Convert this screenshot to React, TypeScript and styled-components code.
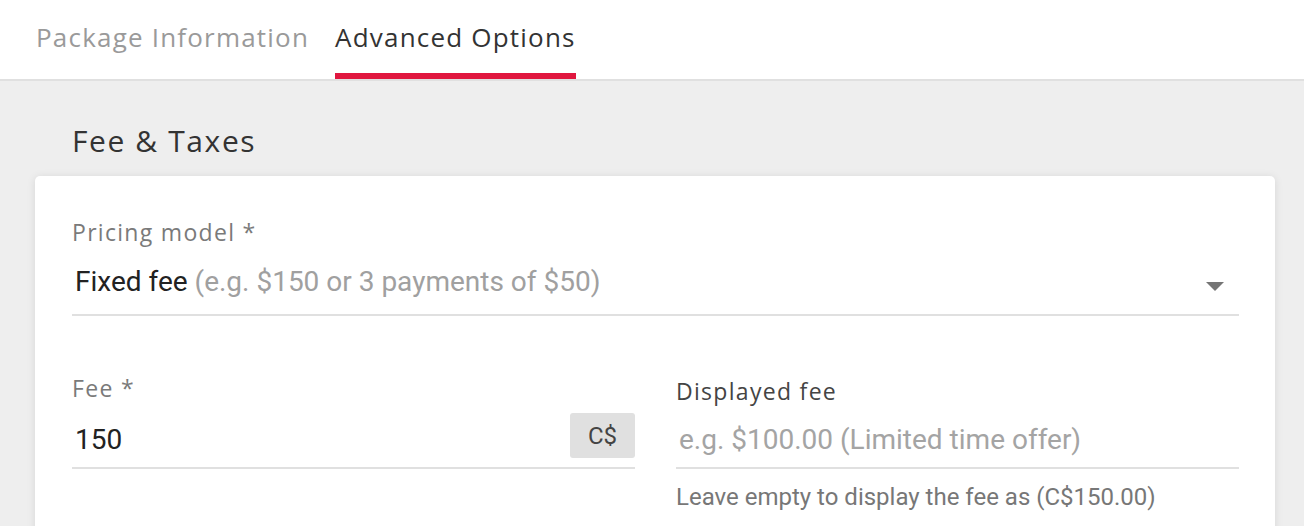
import styled, { createGlobalStyle } from "styled-components";

const GlobalStyle = createGlobalStyle`
  html, body {
    margin: 0;
    padding: 0;
    background: #eeeeee;
  }
  * {
    box-sizing: border-box;
  }
`;

// top tabs
const TabBar = styled.nav`
  display: flex;
  gap: 26px;
  height: 81px;
  padding-left: 36px;
  background: #ffffff;
  border-bottom: 2px solid #e0e0e0;
`;

const Tab = styled.div<{ $active?: boolean }>`
  padding-top: 20px;
  height: 79px;
  font-family: "Open Sans", "Liberation Sans", sans-serif;
  font-size: 26px;
  line-height: 34px;
  letter-spacing: 1.2px;
  color: ${(p) => (p.$active ? "#333333" : "#9a9a9a")};
  border-bottom: 6px solid ${(p) => (p.$active ? "#e0173f" : "transparent")};
  white-space: nowrap;
`;

const Content = styled.main`
  padding: 40px 29px 0 35px;
`;

const SectionTitle = styled.h2`
  margin: 0 0 15px 37px;
  font-family: "Open Sans", "Liberation Sans", sans-serif;
  font-weight: 400;
  font-size: 30px;
  line-height: 40px;
  letter-spacing: 1.6px;
  color: #333333;
`;

const Card = styled.section`
  background: #ffffff;
  border-radius: 5px;
  box-shadow: 0 1px 8px rgba(0, 0, 0, 0.1);
  padding: 41px 36px 60px 37px;
`;

const Field = styled.div`
  display: flex;
  flex-direction: column;
`;

// the right-hand label sits a few px lower than the required ones
const FieldLabel = styled.label<{ $dark?: boolean }>`
  padding-top: ${(p) => (p.$dark ? "3px" : "0")};
  margin-bottom: ${(p) => (p.$dark ? "-3px" : "0")};
  font-family: "Open Sans", "Liberation Sans", sans-serif;
  font-size: 23px;
  line-height: 30px;
  letter-spacing: 1.3px;
  color: ${(p) => (p.$dark ? "#444444" : "#7a7a7a")};
`;

const InputRow = styled.div<{ $top: number; $bottom: number }>`
  box-sizing: content-box;
  display: flex;
  align-items: flex-end;
  min-height: 45px;
  margin-top: ${(p) => p.$top}px;
  padding-bottom: ${(p) => p.$bottom}px;
  border-bottom: 2px solid #e0e0e0;
`;

const InputText = styled.span<{ $placeholder?: boolean }>`
  flex: 1;
  padding-left: 3px;
  font-family: Roboto, "Liberation Sans", sans-serif;
  font-size: 28px;
  line-height: 36px;
  color: ${(p) => (p.$placeholder ? "#a4a4a4" : "#222222")};
  white-space: nowrap;
`;

const Hint = styled.span`
  color: #a0a0a0;
`;

const Arrow = styled.svg`
  width: 18px;
  height: 9px;
  margin: 0 15px 9px 0;
  fill: #757575;
`;

const Adornment = styled.span`
  display: flex;
  align-items: center;
  justify-content: center;
  align-self: flex-start;
  width: 65px;
  height: 45px;
  border-radius: 3px;
  background: #e0e0e0;
  font-family: Roboto, "Liberation Sans", sans-serif;
  font-size: 24px;
  color: #444444;
`;

const FieldGrid = styled.div`
  display: grid;
  grid-template-columns: 1fr 1fr;
  column-gap: 41px;
  margin-top: 57px;
`;

const HelperText = styled.p`
  margin: 14px 0 0;
  font-family: Roboto, "Liberation Sans", sans-serif;
  font-size: 24px;
  line-height: 28px;
  color: #777777;
`;

export default function App() {
  return (
    <>
      <GlobalStyle />
      <TabBar>
        <Tab>Package Information</Tab>
        <Tab $active>Advanced Options</Tab>
      </TabBar>

      <Content>
        <SectionTitle>Fee &amp; Taxes</SectionTitle>
        <Card>
          <Field>
            <FieldLabel>Pricing model *</FieldLabel>
            <InputRow $top={8} $bottom={14}>
              <InputText>
                Fixed fee <Hint>(e.g. $150 or 3 payments of $50)</Hint>
              </InputText>
              <Arrow viewBox="0 0 18 9">
                <path d="M0 0h18L9 9z" />
              </Arrow>
            </InputRow>
          </Field>

          <FieldGrid>
            <Field>
              <FieldLabel>Fee *</FieldLabel>
              <InputRow $top={10} $bottom={9}>
                <InputText>150</InputText>
                <Adornment>C$</Adornment>
              </InputRow>
            </Field>
            <Field>
              <FieldLabel $dark>Displayed fee</FieldLabel>
              <InputRow $top={10} $bottom={9}>
                <InputText $placeholder>e.g. $100.00 (Limited time offer)</InputText>
              </InputRow>
              <HelperText>Leave empty to display the fee as (C$150.00)</HelperText>
            </Field>
          </FieldGrid>
        </Card>
      </Content>
    </>
  );
}
